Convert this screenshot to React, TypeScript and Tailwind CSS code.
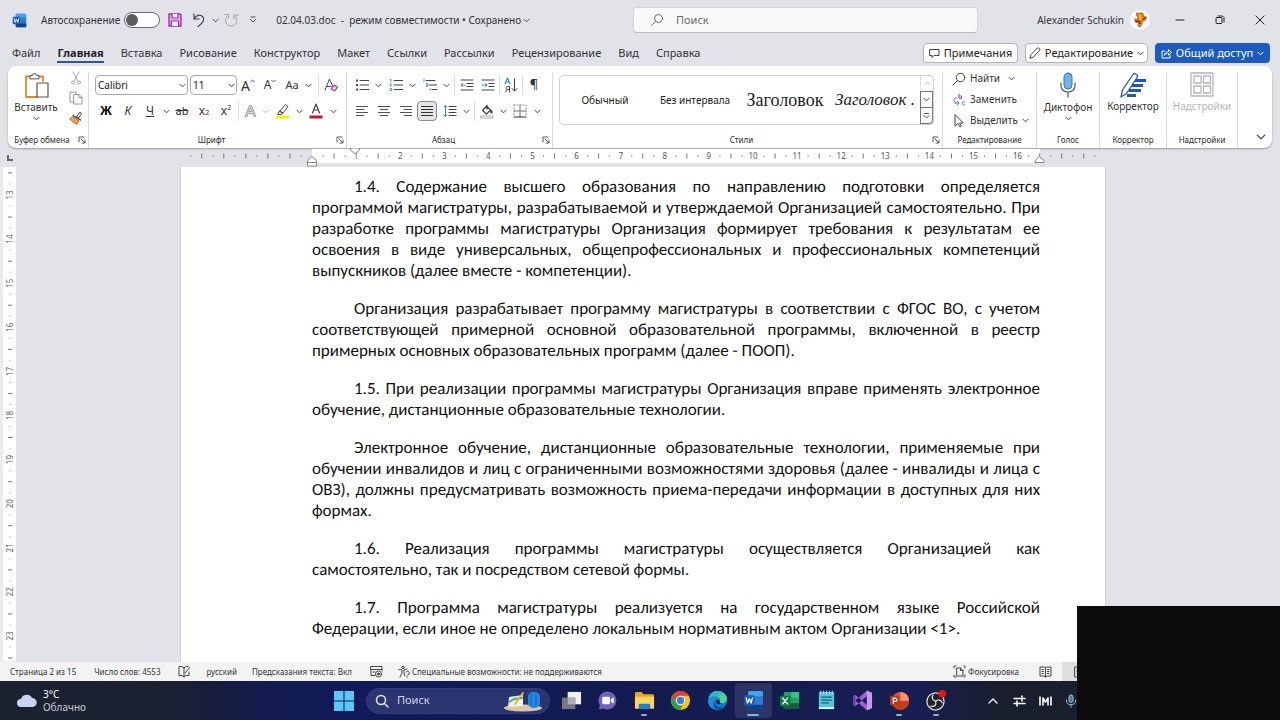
import type { ReactNode } from "react";

const ui = "font-['Noto_Sans','Open_Sans',sans-serif]";

const Svg = ({ w = 16, h = 16, box, children, className = "" }: { w?: number; h?: number; box?: string; children: ReactNode; className?: string }) => (
  <svg width={w} height={h} viewBox={box ?? `0 0 ${w} ${h}`} fill="none" stroke="#444" strokeWidth="1" strokeLinecap="round" strokeLinejoin="round" className={`shrink-0 ${className}`} aria-hidden="true">
    {children}
  </svg>
);

const Chevron = ({ color = "#444", size = 7 }: { color?: string; size?: number }) => (
  <Svg w={size} h={size} box="0 0 8 8"><path d="M1 2.500 4 5.500 7 2.500" stroke={color} strokeWidth="1.100" /></Svg>
);

const Btn = ({ label, w = "w-[22px]", className = "", children }: { label: string; w?: string; className?: string; children: ReactNode }) => (
  <button type="button" aria-label={label} className={`flex h-5 shrink-0 items-center justify-center ${w} ${className}`}>{children}</button>
);

const Drop = ({ label, color }: { label: string; color?: string }) => (
  <Btn label={label} w="w-2.5"><Chevron color={color} /></Btn>
);

const Sep = () => <span className="mx-px h-5 w-px shrink-0 bg-[#dcdcdc]" />;

const Launcher = ({ label }: { label: string }) => (
  <button type="button" aria-label={label} className="flex h-3 w-3 items-center justify-center">
    <Svg w={8} h={8}><path d="M1 6V1h5M3 3l3.500 3.500M7 4v3H4" strokeWidth="0.900" /></Svg>
  </button>
);

const Group = ({ title, width, launcher, children }: { title: string; width: string; launcher?: boolean; children: ReactNode }) => (
  <section className={`flex flex-col border-r border-[#dadada] ${width}`}>
    <div className="min-h-0 flex-1">{children}</div>
    <div className="flex h-4 items-center">
      <h2 className="flex-1 text-center text-[8px] leading-4 whitespace-nowrap text-[#2a2a2a]">{title}</h2>
      {launcher && <Launcher label={`${title}: параметры`} />}
    </div>
  </section>
);

const WordIcon = ({ size }: { size: number }) => (
  <Svg w={size} h={size} box="0 0 20 20">
    <rect x="5" y="1" width="14" height="18" rx="1.500" fill="#2b7cd3" stroke="none" />
    <path d="M5 2.500A1.500 1.500 0 0 1 6.500 1h11A1.500 1.500 0 0 1 19 2.500V6H5z" fill="#41a5ee" stroke="none" />
    <path d="M5 14h14v3.500a1.500 1.500 0 0 1-1.500 1.500h-11A1.500 1.500 0 0 1 5 17.500z" fill="#103f91" stroke="none" />
    <rect x="1" y="5" width="10" height="10" rx="1" fill="#185abd" stroke="none" />
    <path d="m3 7.500 1.300 5L6 8.200l1.700 4.300L9 7.500" stroke="#fff" strokeWidth="1.200" />
  </Svg>
);

function TitleBar() {
  return (
    <header className="grid h-10 grid-cols-[633fr_345fr_302fr] items-center">
      <div className="flex items-center pl-3 text-[10px] text-[#333]">
        <WordIcon size={15} />
        <label className="ml-3.5 flex items-center gap-1 whitespace-nowrap">
          Автосохранение
          <span className="relative h-4 w-9">
            <input type="checkbox" className="peer h-4 w-9 appearance-none rounded-full border border-[#666] bg-white" />
            <span className="pointer-events-none absolute top-0.5 left-0.5 h-3 w-3 rounded-full bg-[#5d5d5d]" />
          </span>
        </label>
        <Btn label="Сохранить" className="ml-1">
          <Svg w={14} h={14}><path d="M1 1h11l1 1v11H1z" fill="#e9a9f0" stroke="#a32bb0" strokeWidth="1.400" /><path d="M4 1v4h6V1M3.500 13V8h7v5" fill="#fff" stroke="#a32bb0" strokeWidth="1.200" /></Svg>
        </Btn>
        <Btn label="Отменить" className="ml-0.5"><Svg w={14} h={15}><path d="M2 1v5h5M2 6c2-4 6-5 8.500-2.500S12 9 6 13.500" strokeWidth="1.200" /></Svg></Btn>
        <Drop label="Список отмены" />
        <Btn label="Повторить"><Svg w={15} h={15}><path d="M4 2.500a5.800 5.800 0 1 0 6.500 0M10 6V2h4M4.500 5V1.500H1" stroke="#a3a3a8" /></Svg></Btn>
        <Btn label="Настройка панели быстрого доступа"><Svg w={8} h={8}><path d="M2 1h4M1.500 3.500 4 6l2.500-2.500" /></Svg></Btn>
        <span className="ml-3 whitespace-pre">02.04.03.doc  -  режим совместимости • Сохранено</span>
        <Drop label="Сведения о файле" />
      </div>
      <label className="flex h-[26px] items-center gap-3 rounded-sm border border-[#d4d5d9] border-b-[#bbb] bg-[#fafafa] pl-4">
        <Svg w={14} h={14}><circle cx="8.500" cy="5.500" r="4" stroke="#666" /><path d="m5.500 8.500-4 4" stroke="#666" /></Svg>
        <input type="search" aria-label="Поиск" placeholder="Поиск" className="min-w-0 flex-1 bg-transparent text-[11px] outline-none placeholder:text-[#6b6b6b]" />
      </label>
      <div className="flex items-center justify-end text-[10px] text-[#333]">
        <span className="whitespace-nowrap">Alexander Schukin</span>
        <button type="button" aria-label="Учётная запись" className="mr-2.5 ml-1.5 flex h-5 w-5 items-center justify-center rounded-full bg-white">
          <Svg w={16} h={16}><path d="m5 1 3 .5 1-1 2.500 1.500-.5 2.500 3.500.5-1 3-3 1-.5 3L8 15l-2-1 .5-3-3-1L2.500 7l3 .5L6 5 4.500 3.500z" fill="#ee850f" stroke="#c9420f" strokeWidth="0.800" /><path d="m7 2 2 .5L8.500 5h2.500L8.500 8 7 7z" fill="#fbb52c" stroke="none" /><path d="M3.500 9.500 7 9l1 2.500M11 7l2-1" stroke="#5b1c10" strokeWidth="1.200" /></Svg>
        </button>
        <button type="button" aria-label="Свернуть" className="flex h-10 w-10 items-center justify-center"><Svg w={10} h={10}><path d="M1 5h8" stroke="#222" /></Svg></button>
        <button type="button" aria-label="Восстановить" className="flex h-10 w-10 items-center justify-center"><Svg w={10} h={10}><rect x="1" y="2.500" width="6" height="6" rx="1" stroke="#222" /><path d="M3 1h4.500L9 2.500V7" stroke="#222" /></Svg></button>
        <button type="button" aria-label="Закрыть" className="flex h-10 w-10 items-center justify-center"><Svg w={10} h={10}><path d="m1 1 8 8M9 1 1 9" stroke="#222" /></Svg></button>
      </div>
    </header>
  );
}

const tabs = ["Файл", "Главная", "Вставка", "Рисование", "Конструктор", "Макет", "Ссылки", "Рассылки", "Рецензирование", "Вид", "Справка"];

function TabBar() {
  return (
    <nav className="flex h-[26px] items-center pr-2.5 pl-3">
      <div className="flex gap-[17px]">
        {tabs.map((t) => (
          <button key={t} type="button" className={t === "Главная" ? "border-b-2 border-[#2b579a] text-[11px] leading-[17px] font-bold text-[#1f1f1f]" : "border-b-2 border-transparent text-[11px] leading-[17px] text-[#333]"}>{t}</button>
        ))}
      </div>
      <div className="ml-auto flex gap-[7px] text-[11px] whitespace-nowrap text-[#222]">
        <button type="button" className="flex h-5 w-[95px] items-center justify-center gap-1 rounded border border-[#b5b5b5] bg-white">
          <Svg w={11} h={11}><path d="M1 1.500h9v6H5l-2 2v-2H1z" /></Svg>Примечания
        </button>
        <button type="button" className="flex h-5 w-[123px] items-center justify-center gap-1 rounded border border-[#b5b5b5] bg-white">
          <Svg w={12} h={12}><path d="m1 11 1-3.500L8.500 1c1-.8 3 1 2.200 2.200L4.500 10z" /></Svg>Редактирование<Chevron />
        </button>
        <button type="button" className="flex h-5 w-[115px] items-center justify-center gap-1 rounded bg-[#1b5abf] text-white">
          <Svg w={11} h={11}><path d="M3.500 3H1v7h8V7.500M3.500 7C4 4 6 3.500 7.500 3.500V1.500L10.500 4.500 7.500 7V5.500C6 5.500 4.500 5.700 3.500 7z" stroke="#fff" /></Svg>Общий доступ<Chevron color="#fff" />
        </button>
      </div>
    </nav>
  );
}

const Lines = ({ d, stroke = "#555" }: { d: string; stroke?: string }) => (
  <Svg w={14} h={14}><path d={d} stroke={stroke} strokeWidth="1.200" strokeLinecap="butt" /></Svg>
);

function Clipboard() {
  return (
    <Group title="Буфер обмена" width="w-[81px]" launcher>
      <div className="flex">
        <button type="button" className="flex w-[60px] flex-col items-center text-[10px] leading-[15px] text-[#333]">
          <Svg w={25} h={28}>
            <path d="M2 4.500h17V9M13 25H2V4.500" stroke="#e08a2c" strokeWidth="1.800" />
            <path d="M6 6.500V3.500h2.500a2 2 0 0 1 4 0H15v3z" fill="#fff" stroke="#555" />
            <rect x="13" y="11" width="11" height="14" fill="#fff" stroke="#555" strokeWidth="1.200" />
          </Svg>
          Вставить
          <Chevron />
        </button>
        <div className="flex flex-col">
          <Btn label="Вырезать" w="w-6" className="-mt-1"><Svg w={12} h={14}><path d="m3 1 5 9M9 1 4 10" stroke="#aaa" /><circle cx="3" cy="11.500" r="1.500" stroke="#aaa" /><circle cx="9" cy="11.500" r="1.500" stroke="#aaa" /></Svg></Btn>
          <Btn label="Копировать" w="w-6"><Svg w={14} h={14}><path d="M5 11H1V1h6v2M5 3.500h5L13 6.500V13H5zM10 3.500v3h3" stroke="#999" /></Svg></Btn>
          <Btn label="Формат по образцу" w="w-6"><Svg w={14} h={14}><path d="m8 5 3-4 1.500 1.500L10 6.500z" fill="#fff" stroke="#444" /><path d="m4 6 6 4-2.500 3.500L1 8.500z" fill="#f0a64a" stroke="#c8641a" /><path d="m4 4.500 7.500 4.500" stroke="#333" strokeWidth="1.400" /></Svg></Btn>
        </div>
      </div>
    </Group>
  );
}

function FontGroup() {
  const select = "h-5 w-full appearance-none rounded border border-[#a9a9a9] bg-white pl-0.5 text-[10px] text-[#222]";
  return (
    <Group title="Шрифт" width="w-[258px]" launcher>
      <div className="flex items-center pt-[3px] pl-1.5">
        <span className="relative mr-0.5 flex w-[93px] items-center">
          <select aria-label="Шрифт" className={select}><option>Calibri</option></select>
          <span className="pointer-events-none absolute right-0.5"><Chevron /></span>
        </span>
        <span className="relative flex w-[47px] items-center">
          <select aria-label="Размер шрифта" className={select}><option>11</option></select>
          <span className="pointer-events-none absolute right-0.5"><Chevron /></span>
        </span>
        <Btn label="Увеличить размер" className="text-[14px] text-[#333]">A<Svg w={5} h={12}><path d="m.5 3 2-2 2 2" strokeWidth=".8" /></Svg></Btn>
        <Btn label="Уменьшить размер" className="text-[12px] text-[#333]">A<Svg w={5} h={12}><path d="m.5 1 2 2 2-2" strokeWidth=".8" /></Svg></Btn>
        <Btn label="Регистр" className="text-[11px] text-[#333]">Aa</Btn>
        <Drop label="Варианты регистра" />
        <span className="w-1" /><Sep />
        <Btn label="Очистить форматирование"><Svg w={14} h={15}><path d="m1 12 4.500-11L9 9M2.500 8.500H7" /><path d="m7 11 3.500-4L13.500 9.500 10.500 13z" fill="#efcdf5" stroke="#a24bb3" strokeWidth="1.200" /></Svg></Btn>
      </div>
      <div className="flex items-center pt-1.5 pl-1.5 text-[12px] text-[#333]">
        <Btn label="Полужирный" className="font-bold text-black">Ж</Btn>
        <Btn label="Курсив" className="italic">К</Btn>
        <Btn label="Подчёркнутый" className="underline">Ч</Btn>
        <Drop label="Виды подчёркивания" />
        <Btn label="Зачёркнутый" className="text-[11px] line-through">ab</Btn>
        <Btn label="Подстрочный">x<sub className="text-[7px]">2</sub></Btn>
        <Btn label="Надстрочный">x<sup className="text-[7px]">2</sup></Btn>
        <Sep />
        <Btn label="Текстовые эффекты" w="w-5"><Svg w={13} h={14}><path d="M1 12.500 5.500 1.500h2l4.500 11h-2l-1.200-3H4.200l-1.200 3zM5 7.500h3L6.500 4z" fill="#d5d5d5" stroke="#a5a5a5" /></Svg></Btn>
        <Drop label="Варианты эффектов" color="#bbb" />
        <Btn label="Цвет выделения" w="w-6"><Svg w={15} h={16}><path d="m5 8 5.500-6.500L13 3.500 8 10zM5 8l3 2-2 1.500H3z" /><path d="M1 14h13" stroke="#f5f500" strokeWidth="3" strokeLinecap="butt" /></Svg></Btn>
        <Drop label="Варианты выделения" />
        <Btn label="Цвет текста" w="w-6"><Svg w={14} h={16}><path d="M3.500 10 7 1l3.500 9M4.700 7h4.600" strokeWidth="1.200" /><path d="M.5 14h13" stroke="#c4122f" strokeWidth="3" strokeLinecap="butt" /></Svg></Btn>
        <Drop label="Варианты цвета" />
      </div>
    </Group>
  );
}

const listLines = "M5 2.500h9M5 7h9M5 11.500h9";

function ParagraphGroup() {
  return (
    <Group title="Абзац" width="w-[206px]" launcher>
      <div className="flex items-center pt-[3px] pl-1">
        <Btn label="Маркеры"><Svg w={14} h={14}><path d={listLines} /><path d="M1 1.500h2v2H1zM1 6h2v2H1zM1 10.500h2v2H1z" fill="#2b579a" stroke="none" /></Svg></Btn>
        <Drop label="Варианты маркеров" />
        <span className="w-0.5" />
        <Btn label="Нумерация"><Svg w={14} h={14}><path d={listLines} /><path d="M1 1.500h1v2M1 6h1.500L1 8h1.500M1 10.500h1.500v2H1" stroke="#3a86d0" strokeWidth=".8" /></Svg></Btn>
        <Drop label="Варианты нумерации" />
        <span className="w-0.5" />
        <Btn label="Многоуровневый список"><Svg w={14} h={14}><path d="M3 2.500h9M6 7h8M9 11.500h5" /><path d="M1 1v3M3.500 6v2.500h1V6zM7 10.500v2" stroke="#3a86d0" strokeWidth=".8" /></Svg></Btn>
        <Drop label="Варианты списка" />
        <span className="w-0.5" /><Sep />
        <Btn label="Уменьшить отступ"><Svg w={14} h={14}><path d="M1 2h12M7 5.500h6M7 8.500h6M1 12h12" /><path d="M5 7H1m1.500-1.500L1 7l1.500 1.500" stroke="#3a86d0" /></Svg></Btn>
        <Btn label="Увеличить отступ" w="w-5"><Svg w={14} h={14}><path d="M1 2h12M8 5.500h5M8 8.500h5M1 12h12" /><path d="M1 7h5M4.500 5.500 6 7 4.500 8.500" stroke="#3a86d0" /></Svg></Btn>
        <Sep />
        <Btn label="Сортировка" w="w-5"><Svg w={14} h={16}><path d="m1 7 2.500-6L6 7M2 5h3" stroke="#3a86d0" strokeWidth="1.200" /><path d="M5.500 15V9.500H3.500c-2 0-2 3 0 3h2M3.500 12.500 1.500 15" /><path d="M10.500 2v12M8 11.500l2.500 2.500 2.500-2.500" /></Svg></Btn>
        <Sep />
        <Btn label="Показать все знаки" w="w-5" className="text-[13px] text-[#333]">¶</Btn>
      </div>
      <div className="flex items-center pt-1.5 pl-1">
        <Btn label="По левому краю"><Lines d="M1 2.500h12M1 5.500h8M1 8.500h12M1 11.500h8" /></Btn>
        <Btn label="По центру"><Lines d="M1 2.500h12M3 5.500h8M1 8.500h12M3 11.500h8" /></Btn>
        <Btn label="По правому краю"><Lines d="M1 2.500h12M5 5.500h8M1 8.500h12M5 11.500h8" /></Btn>
        <Btn label="По ширине" w="w-5" className="rounded border border-[#8a8a8a] bg-[#e6e6e6]"><Lines d="M1 2.500h12M1 5.500h12M1 8.500h12M1 11.500h12" stroke="#333" /></Btn>
        <span className="w-0.5" />
        <Btn label="Интервал"><Svg w={14} h={14}><path d="M6 2.500h7M6 5.500h7M6 8.500h7M6 11.500h7" /><path d="M2.500 1.500v11M1 3l1.500-1.500L4 3M1 11l1.500 1.500L4 11" stroke="#3a86d0" /></Svg></Btn>
        <Drop label="Варианты интервала" />
        <span className="w-0.5" /><Sep />
        <Btn label="Заливка"><Svg w={14} h={15}><path d="m2.500 6.500 4-4.500 4 4-4 4zM7 1v4M11.500 6.500c1 1.500 1 2.500 0 2.500s-1-1 0-2.500" strokeWidth="1.200" /><path d="M1 12h12v2H1z" stroke="#999" strokeWidth=".8" /></Svg></Btn>
        <Drop label="Варианты заливки" />
        <Btn label="Границы" w="w-6"><Svg w={14} h={14}><path d="M1 1h12v12M1 1v12" stroke="#888" strokeDasharray="1 2" /><path d="M7 1v12M1 7h12" stroke="#777" /><path d="M1 13h12" stroke="#333" /></Svg></Btn>
        <Drop label="Варианты границ" />
      </div>
    </Group>
  );
}

function StylesGroup() {
  const item = "whitespace-nowrap";
  return (
    <Group title="Стили" width="min-w-0 flex-1" launcher>
      <div className="mr-2 ml-1.5 mt-[3px] flex h-[50px] rounded border border-[#d2d2d2]">
        <div className="grid flex-1 grid-cols-4 items-center text-center text-[#222]">
          <button type="button" className={`${item} text-[10px]`}>Обычный</button>
          <button type="button" className={`${item} text-[10px]`}>Без интервала</button>
          <button type="button" className={`${item} font-['Liberation_Serif',serif] text-[18px]`}>Заголовок</button>
          <button type="button" className={`${item} font-['Liberation_Serif',serif] text-[17px] italic`}>Заголовок .</button>
        </div>
        <div className="flex w-[13px] flex-col">
          <button type="button" aria-label="Предыдущие стили" className="flex flex-1 items-center justify-center border-l border-[#ddd]"><Svg w={7} h={7}><path d="M1 4.500 3.500 2 6 4.500" stroke="#bbb" /></Svg></button>
          <button type="button" aria-label="Следующие стили" className="flex flex-1 items-center justify-center border border-[#777]"><Chevron /></button>
          <button type="button" aria-label="Все стили" className="flex flex-1 items-center justify-center rounded-br border border-t-0 border-[#777]"><Svg w={7} h={8}><path d="M1.500 1.500h4M1 3.500 3.500 6 6 3.500" strokeWidth=".9" /></Svg></button>
        </div>
      </div>
    </Group>
  );
}

function EditingGroup() {
  const row = "flex h-[21px] items-center gap-1 text-[10px] whitespace-nowrap text-[#333]";
  return (
    <Group title="Редактирование" width="w-[94px]">
      <div className="-mt-1 flex flex-col pl-[9px]">
        <button type="button" className={row}><Svg w={14} h={14}><circle cx="8.500" cy="5.500" r="4.200" /><path d="M5.500 8.500 1 13" /></Svg>Найти<span className="ml-1"><Chevron /></span></button>
        <button type="button" className={row}><Svg w={14} h={14}><path d="M7 1v4.500h2.500V3H7" stroke="#a24bb3" /><path d="M5 5C1 4 1 10 4 10" stroke="#a24bb3" /><path d="M12.500 9c-3-1.500-3 4 0 3M5 8l2 2-2 2M3 10h4" stroke="#3a86d0" /></Svg>Заменить</button>
        <button type="button" className={row}><Svg w={14} h={14}><path d="M3 1v11l3-2.500 2 3.500 1.500-1L7.500 9H11z" /></Svg>Выделить<Chevron /></button>
      </div>
    </Group>
  );
}

const BigButton = ({ label, drop, muted, children }: { label: string; drop?: boolean; muted?: boolean; children: ReactNode }) => (
  <button type="button" className={`flex w-full flex-col items-center text-[10px] leading-4 ${muted ? "text-[#b5b5b5]" : "text-[#333]"}`}>
    {children}{label}{drop && <Chevron />}
  </button>
);

function Ribbon() {
  return (
    <div className="mx-2 flex h-[82px] shrink-0 rounded-lg bg-white pt-1.5 shadow-[0_1px_2px_#0005]">
      <Clipboard />
      <FontGroup />
      <ParagraphGroup />
      <StylesGroup />
      <EditingGroup />
      <Group title="Голос" width="w-[63px]">
        <BigButton label="Диктофон" drop>
          <Svg w={18} h={27}><rect x="5" y="1" width="8" height="16" rx="4" fill="#6fb4e3" stroke="#3078b4" /><path d="M2 11v3c0 8 14 8 14 0v-3M9 20v5" stroke="#555" strokeWidth="1.200" /></Svg>
        </BigButton>
      </Group>
      <Group title="Корректор" width="w-[67px]">
        <BigButton label="Корректор">
          <Svg w={26} h={26}>
            <path d="M14 8.500h12M12 13.500h11M9 18.500h12M7 23.500h9" stroke="#2459b3" strokeWidth="3.200" strokeLinecap="butt" />
            <path d="m1 25 1.500-7L13 2.500c1.500-2 5.500.5 4.200 2.800L6.500 21.500z" fill="#fff" stroke="#2459b3" strokeWidth="1.300" />
          </Svg>
        </BigButton>
      </Group>
      <Group title="Надстройки" width="w-[71px]">
        <BigButton label="Надстройки" muted>
          <Svg w={24} h={26}><path d="M1 1h22v23H1zM4 4h7v7H4zM13.500 4h7v7h-7zM4 14h7v7H4zM13.500 14h7v7h-7z" stroke="#b5b5b5" strokeWidth="1.300" /></Svg>
        </BigButton>
      </Group>
      <div className="flex w-[34px] items-end justify-center pb-1.5 pl-3">
        <button type="button" aria-label="Свернуть ленту"><Chevron size={10} /></button>
      </div>
    </div>
  );
}

const CM = 44.1;

function HorizontalRuler() {
  const marks = Array.from({ length: 92 }, (_, i) => i - 12);
  return (
    <div className="flex h-[19px] shrink-0 items-center pr-2.5">
      <span className="mr-1 ml-[7px] h-1.5 w-1.5 border-b-2 border-l-2 border-[#666]" />
      <div className="flex flex-1 justify-center">
        <svg width="924" height="19" viewBox="181 149 924 19" className={ui} role="img" aria-label="Горизонтальная линейка">
          <rect x="311" y="150" width="728" height="14" fill="#fff" />
          {marks.map((i) => {
            const x = 311 + (i * CM) / 4;
            if (x < 181 || x > 1095 || i === 0) return null;
            if (i % 4 === 0 && i > 0 && i <= 64) return <text key={i} x={x} y="160" fontSize="8" textAnchor="middle" fill="#555">{i / 4}</text>;
            return i % 2 === 0 ? <path key={i} d={`M${x} 154.500v5`} stroke="#777" /> : <path key={i} d={`M${x} 156.500v1.500`} stroke="#888" />;
          })}
          <path d="M349.500 149h9v2l-4.500 4-4.500-4z" fill="#fff" stroke="#888" />
          <path d="M306.500 167v-5.500l4.500-4 4.500 4V167zM306.500 163.500h9" fill="#fff" stroke="#888" />
          <path d="M1034 163.500v-2l4.500-4 4.500 4v2z" fill="#fff" stroke="#888" />
        </svg>
      </div>
    </div>
  );
}

function VerticalRuler() {
  const marks = Array.from({ length: 45 }, (_, i) => i - 2);
  return (
    <div className="w-4 shrink-0 overflow-hidden bg-[#ececee] pl-[3px]">
      <svg width="13" height="494" viewBox="0 168 13 494" className={`bg-white ${ui}`} role="img" aria-label="Вертикальная линейка">
        {marks.map((i) => {
          const y = 196 + (i * CM) / 4;
          if (i % 4 === 0) return <text key={i} transform={`translate(10 ${y}) rotate(-90)`} fontSize="8" textAnchor="middle" fill="#666">{13 + i / 4}</text>;
          return i % 2 === 0 ? <path key={i} d={`M5 ${y}h4`} stroke="#777" /> : <path key={i} d={`M6.500 ${y}h1`} stroke="#999" />;
        })}
      </svg>
    </div>
  );
}

const paragraphs = [
  ["1.4. Содержание высшего образования по направлению подготовки определяется", "программой магистратуры, разрабатываемой и утверждаемой Организацией самостоятельно. При", "разработке программы магистратуры Организация формирует требования к результатам ее", "освоения в виде универсальных, общепрофессиональных и профессиональных компетенций", "выпускников (далее вместе - компетенции)."],
  ["Организация разрабатывает программу магистратуры в соответствии с ФГОС ВО, с учетом", "соответствующей примерной основной образовательной программы, включенной в реестр", "примерных основных образовательных программ (далее - ПООП)."],
  ["1.5. При реализации программы магистратуры Организация вправе применять электронное", "обучение, дистанционные образовательные технологии."],
  ["Электронное обучение, дистанционные образовательные технологии, применяемые при", "обучении инвалидов и лиц с ограниченными возможностями здоровья (далее - инвалиды и лица с", "ОВЗ), должны предусматривать возможность приема-передачи информации в доступных для них", "формах."],
  ["1.6. Реализация программы магистратуры осуществляется Организацией как", "самостоятельно, так и посредством сетевой формы."],
  ["1.7. Программа магистратуры реализуется на государственном языке Российской", "Федерации, если иное не определено локальным нормативным актом Организации <1>."],
];

function Document() {
  return (
    <main className="flex min-h-0 flex-1">
      <VerticalRuler />
      <div className="flex flex-1 justify-center overflow-hidden pr-2.5">
        <article className="flex w-[926px] flex-col gap-[17px] border-x border-[#d2d4d8] bg-white pt-[9px] pr-[65px] pl-[131px] font-['Carlito','Lato','Noto_Sans',sans-serif] text-[17px] leading-[21px] text-[#111] [text-rendering:geometricPrecision]">
          {paragraphs.map((lines) => (
            <p key={lines[0]}>
              {lines.map((line, i) => (
                <span key={line} className={`block ${i === 0 ? "pl-[42px]" : ""} ${i < lines.length - 1 ? "[text-align-last:justify]" : ""}`}>{line} </span>
              ))}
            </p>
          ))}
        </article>
      </div>
    </main>
  );
}

function StatusBar() {
  return (
    <footer className="flex h-[19px] shrink-0 items-center bg-[#f3f3f3] pl-2.5 text-[8px] whitespace-nowrap text-[#333]">
      <span>Страница 2 из 15</span>
      <span className="ml-[18px]">Число слов: 4553</span>
      <button type="button" aria-label="Правописание" className="ml-[18px]"><Svg w={13} h={13}><path d="M6 3 4 1.500H1v9h3l2 1.500 2-1.500h3V7M6 3v9M6 3l2-1.500h2M7 8l4.500-5.500" /></Svg></button>
      <span className="ml-[15px]">русский</span>
      <span className="ml-[15px]">Предсказания текста: Вкл</span>
      <button type="button" aria-label="Запись макроса" className="ml-[18px]"><Svg w={13} h={13}><path d="M1 1.500h11v3H1zM1 4.500v6h4M3 7h2M12 4.500V6" /><circle cx="8.500" cy="9" r="3" /><circle cx="8.500" cy="9" r="1" fill="#444" /></Svg></button>
      <button type="button" className="ml-[15px] flex items-center gap-px"><Svg w={13} h={13}><circle cx="5" cy="2.500" r="1.300" /><path d="M1 4.500 4 5v3l-2 4M9 4 6 5v3l1 3M8 7c2-2 4 0 3 2l-1.500 1M9 12h.5" /></Svg>Специальные возможности: не поддерживаются</button>
      <button type="button" className="ml-auto flex items-center gap-0.5"><Svg w={13} h={13}><path d="M4 3h3.500L10 5.500V11H4zM7.500 3v2.500H10M1 3V1h2M1 10v2h2M11 1h1v2M12 10v2h-1" /></Svg>Фокусировка</button>
      <button type="button" aria-label="Режим чтения" className="mr-2.5 ml-5"><Svg w={13} h={12}><path d="M6.500 2 5 1H1v9h4l1.500 1L8 10h4V1H8zM6.500 2v9M3 3.500h1.500M3 5.500h1.500M3 7.500h1.500M8.500 3.500H10M8.500 5.500H10M8.500 7.500H10" /></Svg></button>
      <button type="button" aria-label="Разметка страницы" className="flex h-full w-[218px] items-center bg-[#dedede] pl-3"><Svg w={11} h={12}><path d="M1 1h9v10H1zM3 3.500h5M3 5.500h5M3 7.500h5" /></Svg></button>
    </footer>
  );
}

const Tile = ({ children }: { children: ReactNode }) => <Svg w={21} h={21} box="0 0 22 22">{children}</Svg>;

const apps: { name: string; state?: "open" | "active"; icon: ReactNode }[] = [
  { name: "Представление задач", icon: <Tile><rect x="7" y="2" width="14" height="13" fill="#f1f1f4" stroke="none" /><rect x="1" y="8" width="14" height="12" fill="#77777c" stroke="none" /><path d="M7 8h8v7H7z" fill="#b0b0b5" stroke="none" /></Tile> },
  { name: "Чат", icon: <Tile><path d="M11 1.500a9.500 9.500 0 1 1-4.500 18L2 20.500l1-4.500A9.500 9.500 0 0 1 11 1.500z" fill="#6d65bb" stroke="none" /><rect x="5.500" y="7" width="8" height="8" rx="1.500" fill="#fff" stroke="none" /><path d="m14.500 10 3-2.500v7l-3-2.500z" fill="#fff" stroke="none" /></Tile> },
  { name: "Проводник", state: "open", icon: <Tile><path d="M1 3.500A1.500 1.500 0 0 1 2.500 2H8l2 2.500h9.500A1.500 1.500 0 0 1 21 6v13H1z" fill="#eaa51f" stroke="none" /><path d="M1 7h20v12.500H1z" fill="#ffd55c" stroke="none" /><path d="M5 20v-4a1.500 1.500 0 0 1 1.500-1.500h9A1.500 1.500 0 0 1 17 16v4z" fill="#1d7fd0" stroke="none" /></Tile> },
  { name: "Chrome", icon: <Tile><circle cx="11" cy="11" r="10" fill="#fbc116" stroke="none" /><path d="M2.300 6A10 10 0 0 1 19.700 6H11a5 5 0 0 0-4.400 7.500z" fill="#e33b2e" stroke="none" /><path d="M2.300 6l4.400 7.500A5 5 0 0 0 13 15.600L11 21A10 10 0 0 1 2.300 6z" fill="#2da14c" stroke="none" /><circle cx="11" cy="11" r="5" fill="#fff" stroke="none" /><circle cx="11" cy="11" r="3.900" fill="#3a7de8" stroke="none" /></Tile> },
  { name: "Edge", icon: <Tile><circle cx="11" cy="11" r="10" fill="#1378c8" stroke="none" /><path d="M2 9C3 4 6.500 1 11 1c6 0 10 4 10 8.500 0 4.500-6 5.500-8 3 1.500-2.500 0-5-3-5.500C6.500 6.500 4 7 2 9z" fill="#4fd58f" stroke="none" /><path d="M2 9C3 4 6.500 1 11 1c2 0 4 .5 5.500 1.500-1 3-4 3.500-6.500 4C6.500 6.500 4 7 2 9z" fill="#2fb8c8" stroke="none" /><path d="M1 11c1-3.500 5-5 8.500-4.500 2.500.5 4.500 2.500 3.800 5C12 10 9 10 8.500 12c-.8 4 3.500 6.500 8 5.500-2 2.500-5 3.500-7.500 3C4 19.500 1 15.500 1 11z" fill="#1f8ed8" stroke="none" /><path d="M8.500 11c-2 5 3 8.500 9.500 6-2.500 3.500-7 4.500-10 1.500-2-2-1.500-5.500.5-7.500z" fill="#0d4d9c" stroke="none" /><path d="M9 11c1-1.500 4-1.500 4.200.5-.7 1 .3 2 1.800 2.300-2 1.700-6.500.7-6-2.800z" fill="#101d55" stroke="none" /></Tile> },
  { name: "Word", state: "active", icon: <WordIcon size={21} /> },
  { name: "Excel", icon: <Tile><rect x="5" y="2" width="16" height="18" rx="1.500" fill="#21a366" stroke="none" /><path d="M13 2h6.500A1.500 1.500 0 0 1 21 3.500V8h-8z" fill="#33c481" stroke="none" /><path d="M5 14h16v4.500a1.500 1.500 0 0 1-1.500 1.500h-13A1.500 1.500 0 0 1 5 18.500z" fill="#185c37" stroke="none" /><rect x="1" y="6" width="11" height="11" rx="1" fill="#107c41" stroke="none" /><path d="m4 8.500 5 6M9 8.500l-5 6" stroke="#fff" strokeWidth="1.500" /></Tile> },
  { name: "Блокнот", icon: <Tile><rect x="3" y="2" width="16" height="18" rx="1" fill="#57c3dc" stroke="none" /><path d="M3 18h16v2H3z" fill="#e5f3f7" stroke="none" /><path d="M5 1v3M8 1v3M11 1v3M14 1v3M17 1v3" stroke="#a8e5ef" /><path d="M6 7.500h10M6 10.500h10M6 13.500h7" stroke="#17637d" strokeWidth="1.300" /></Tile> },
  { name: "Visual Studio", icon: <Tile><path d="m1 6.500 2.500-1.500 12.500 11V21.500L1.500 9.500zM1 15.500 3.500 17 16 6V.5L2 12z" fill="#9a62d0" stroke="none" /><path d="m15.500.5 5.500 2.500v16l-5.500 2.500z" fill="#c79af0" stroke="none" /><path d="M1 6.500 3.500 5v12L1 15.500z" fill="#6b3ba8" stroke="none" /></Tile> },
  { name: "PowerPoint", state: "open", icon: <Tile><circle cx="12" cy="11" r="9" fill="#e2583a" stroke="none" /><path d="M12 2a9 9 0 0 1 9 9h-9z" fill="#ff9070" stroke="none" /><path d="M3 12h18a9 9 0 0 1-18 0z" fill="#c43e1c" stroke="none" /><rect x="1" y="6" width="10" height="10" rx="1" fill="#b7371b" stroke="none" /><path d="M4.500 14V8.500h2c2.500 0 2.500 3.500 0 3.500h-2" stroke="#fff" strokeWidth="1.300" /></Tile> },
  { name: "OBS Studio", state: "open", icon: <Tile><circle cx="11" cy="12" r="9" fill="#25232a" stroke="#dedede" strokeWidth="1.300" /><path d="M11 11.500c-3-.5-4.500-3.500-2.500-6.500M11.500 12c2-2.500 5.500-2 6.500 1.500M11 12.500c1.500 3-1 5.500-5 4.500" stroke="#dedede" strokeWidth="1.300" /><circle cx="18" cy="4" r="4" fill="#ee1313" stroke="none" /></Tile> },
];

function Taskbar() {
  return (
    <footer className="flex h-[39px] shrink-0 items-center bg-[linear-gradient(90deg,#1c2230_0%,#1b2130_13%,#141c4c_20%,#101a5c_28%,#131b50_50%,#161f50_72%,#1a1f2e_78%,#191d2a_100%)] text-white">
      <button type="button" className="flex w-[329px] items-center gap-1.5 pl-4 text-left text-[10px] leading-[13px]">
        <Svg w={21} h={16}><path d="M5 14a4 4 0 0 1 0-8 6 6 0 0 1 11-1 4.500 4.500 0 0 1 .5 9z" fill="#c9d4f5" stroke="none" /></Svg>
        <span>3°C<br /><span className="text-[#c8cad2]">Облачно</span></span>
      </button>
      <button type="button" aria-label="Пуск" className="mr-[11px] ml-1"><Svg w={22} h={22}><path d="M1 1h9.500v9.500H1zM11.500 1H21v9.500h-9.500zM1 11.500h9.500V21H1zM11.500 11.500H21V21h-9.500z" fill="#5bc7f5" stroke="none" /></Svg></button>
      <label className="flex h-[26px] w-[184px] items-center gap-2 rounded-full border border-[#343d7c] bg-[#2b3570] pr-1.5 pl-2">
        <Svg w={14} h={14}><circle cx="6" cy="6" r="4.500" stroke="#e5e7f3" strokeWidth="1.500" /><path d="m9.500 9.500 3.500 3.500" stroke="#e5e7f3" strokeWidth="1.500" /></Svg>
        <input type="search" aria-label="Поиск в Windows" placeholder="Поиск" className="min-w-0 flex-1 bg-transparent text-[11px] outline-none placeholder:text-[#d2d5e6]" />
        <Svg w={40} h={22}><ellipse cx="20" cy="18" rx="19" ry="3.500" fill="#dfc49f" stroke="none" /><path d="m6 7 14-2v11L5 17z" fill="#eef3ea" stroke="none" /><path d="m6 12 5-3 8-1" stroke="#56a087" strokeWidth="2" /><path d="m12 14 8-11" stroke="#e8b53c" strokeWidth="2" /><rect x="25" y="2" width="12" height="16" rx="5" fill="#2185e4" stroke="none" /><path d="M28 5v10M33 5v10" stroke="#1462be" /></Svg>
      </label>
      <div className="ml-[3px] grid h-full w-[401px] shrink-0 grid-cols-11">
        {apps.map((a) => (
          <button key={a.name} type="button" aria-label={a.name} className={`relative my-0.5 flex items-center justify-center rounded ${a.state === "active" ? "bg-white/10" : ""}`}>
            {a.icon}
            {a.state && <span className={`absolute bottom-0.5 h-0.5 rounded-full ${a.state === "active" ? "w-3 bg-[#75bdf0]" : "w-1.5 bg-[#a5a8b8]"}`} />}
          </button>
        ))}
      </div>
      <div className="ml-auto flex items-center pr-[196px]">
        <Btn label="Скрытые значки" w="w-[26px]"><Svg w={10} h={10}><path d="m1 7 4-4 4 4" stroke="#fff" strokeWidth="1.300" /></Svg></Btn>
        <Btn label="Настройки звука" w="w-[26px]"><Svg w={13} h={12}><path d="M1 3.500h11M1 8.500h11M9 1v5M4 6v5" stroke="#fff" strokeWidth="1.500" /></Svg></Btn>
        <Btn label="Микшер" w="w-[26px]"><Svg w={13} h={12}><path d="M1 2v8M12 2v8M4 10V3l2.500 4L9 3v7" stroke="#fff" strokeWidth="1.600" /></Svg></Btn>
        <Btn label="Микрофон" w="w-[26px]"><Svg w={12} h={14}><rect x="4" y="1" width="4" height="7.500" rx="2" fill="#55737e" stroke="#8fc7d4" /><path d="M1.500 6v1c0 5 9 5 9 0V6M6 11v2" stroke="#8fc7d4" /></Svg></Btn>
      </div>
    </footer>
  );
}

export default function App() {
  return (
    <div className={`flex h-screen flex-col overflow-hidden bg-[#e1e3e8] ${ui}`}>
      <TitleBar />
      <TabBar />
      <Ribbon />
      <HorizontalRuler />
      <Document />
      <StatusBar />
      <Taskbar />
      <aside aria-label="Изображение камеры" className="fixed right-0 bottom-0 h-[114px] w-[203px] bg-[#0c0a0b]" />
    </div>
  );
}
